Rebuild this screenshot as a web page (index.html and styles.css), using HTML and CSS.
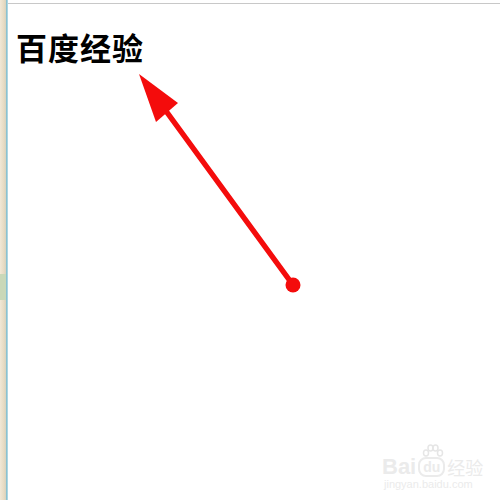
FILE: index.html
```html
<!DOCTYPE html>
<html>
<head>
<meta charset="utf-8">
<link rel="stylesheet" href="styles.css">
</head>
<body>
<div class="frame">
  <div class="side">
    <div class="side-hl"></div>
  </div>
  <div class="edge"></div>
  <div class="main">
    <div class="topbar"></div>
    <div class="content">
      <h1 class="title">百度经验</h1>
    </div>
  </div>
</div>
<svg class="arrow" width="500" height="500" viewBox="0 0 500 500">
  <line x1="293" y1="285" x2="166" y2="111" stroke="#f40c0c" stroke-width="5.5" stroke-linecap="round"/>
  <polygon points="139,74 178,103 156,122" fill="#f40c0c"/>
  <circle cx="293" cy="285" r="7.5" fill="#f40c0c"/>
</svg>
<div class="mark">
  <svg class="paw" width="22" height="16" viewBox="0 0 22 16">
    <g fill="none" stroke="#e6e6e6" stroke-width="1.5">
      <ellipse cx="4" cy="9" rx="2.5" ry="3"/>
      <ellipse cx="8.5" cy="4" rx="2.5" ry="3"/>
      <ellipse cx="13.5" cy="4" rx="2.5" ry="3"/>
      <ellipse cx="18" cy="9" rx="2.5" ry="3"/>
    </g>
  </svg>
  <div class="mark-row">
    <span class="mark-bai">Bai</span>
    <span class="mark-du">du</span>
    <span class="mark-jy">经验</span>
  </div>
  <div class="mark-url">jingyan.baidu.com</div>
</div>
</body>
</html>
```

FILE: styles.css
```css
html, body {
  margin: 0;
  padding: 0;
  background: #ffffff;
}
.frame {
  display: flex;
  width: 500px;
  height: 500px;
  overflow: hidden;
}
.side {
  width: 6px;
  background: linear-gradient(to right, #f1e8d6, #e8dcc4 60%, #d9d2bc);
  display: flex;
  flex-direction: column;
  padding-top: 274px;
  box-sizing: border-box;
}
.side-hl {
  height: 26px;
  background: #c9d8b8;
}
.edge {
  width: 2px;
  background: linear-gradient(to right, #7bb7c9, #bde0e8);
}
.main {
  flex: 1;
  display: flex;
  flex-direction: column;
  padding-top: 3px;
}
.topbar {
  height: 1px;
  background: #c8c8c8;
}
.content {
  padding: 23px 0 0 8px;
}
.title {
  margin: 0;
  font-family: "Noto Sans CJK SC", sans-serif;
  font-weight: 700;
  font-size: 31px;
  line-height: 40px;
  color: #000;
  letter-spacing: 1px;
}
.arrow {
  position: absolute;
  left: 0;
  top: 0;
}
.mark {
  position: absolute;
  left: 382px;
  top: 444px;
  color: #ebebeb;
  font-family: "Liberation Sans", sans-serif;
  display: flex;
  flex-direction: column;
}
.paw {
  margin-left: 40px;
  margin-bottom: -3px;
}
.mark-row {
  display: flex;
  align-items: center;
  gap: 2px;
  line-height: 20px;
}
.mark-bai {
  font-size: 22px;
  font-weight: 700;
}
.mark-du {
  font-size: 14px;
  font-weight: 700;
  border: 2px solid #ebebeb;
  border-radius: 8px;
  padding: 0 3px;
  line-height: 16px;
}
.mark-jy {
  font-family: "Noto Sans CJK SC", sans-serif;
  font-size: 18px;
}
.mark-url {
  font-size: 11px;
  margin-left: 2px;
  line-height: 14px;
}
```
